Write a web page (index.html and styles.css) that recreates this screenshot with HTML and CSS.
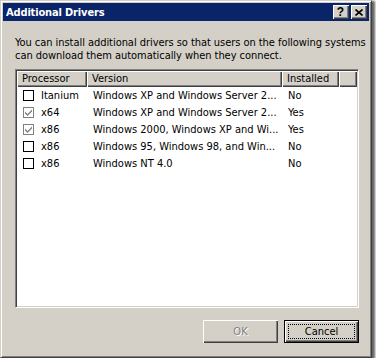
FILE: index.html
```html
<!DOCTYPE html>
<html lang="en">
<head>
  <meta charset="UTF-8" />
  <title>Additional Drivers</title>
  <link rel="stylesheet" href="styles.css">
</head>
<body>
  <div class="window">
    <div class="titlebar">
      <span class="title">Additional Drivers</span>
      <div class="caption-buttons">
        <span class="cap-btn help">?</span>
        <span class="cap-btn close">
          <svg width="8" height="7" viewBox="0 0 8 7"><path d="M0.5 0.5 L7.5 6.5 M7.5 0.5 L0.5 6.5" stroke="#000" stroke-width="1.6" fill="none"/></svg>
        </span>
      </div>
    </div>

    <div class="content">
      <p class="intro">You can install additional drivers so that users on the following systems<br>can download them automatically when they connect.</p>

      <div class="listview">
        <div class="lv-header">
          <div class="col">Processor</div>
          <div class="col">Version</div>
          <div class="col">Installed</div>
          <div class="col"></div>
        </div>

        <div class="lv-row">
          <div class="cell proc"><span class="check"></span>Itanium</div>
          <div class="cell">Windows XP and Windows Server 2...</div>
          <div class="cell">No</div>
        </div>
        <div class="lv-row">
          <div class="cell proc"><span class="check checked"><svg width="9" height="9" viewBox="0 0 9 9"><path d="M1 3.5 L3.5 6 L8 1.5 L8 3.5 L3.5 8 L1 5.5 Z" fill="#808080"/></svg></span>x64</div>
          <div class="cell">Windows XP and Windows Server 2...</div>
          <div class="cell">Yes</div>
        </div>
        <div class="lv-row">
          <div class="cell proc"><span class="check checked"><svg width="9" height="9" viewBox="0 0 9 9"><path d="M1 3.5 L3.5 6 L8 1.5 L8 3.5 L3.5 8 L1 5.5 Z" fill="#808080"/></svg></span>x86</div>
          <div class="cell">Windows 2000, Windows XP and Wi...</div>
          <div class="cell">Yes</div>
        </div>
        <div class="lv-row">
          <div class="cell proc"><span class="check"></span>x86</div>
          <div class="cell">Windows 95, Windows 98, and Win...</div>
          <div class="cell">No</div>
        </div>
        <div class="lv-row">
          <div class="cell proc"><span class="check"></span>x86</div>
          <div class="cell">Windows NT 4.0</div>
          <div class="cell">No</div>
        </div>
      </div>

      <div class="buttons">
        <button class="btn" disabled>OK</button>
        <button class="btn default">Cancel</button>
      </div>
    </div>
  </div>
</body>
</html>
```

FILE: styles.css
```css
body {
  margin: 0;
  background: #fff;
  font-family: "DejaVu Sans Condensed", "DejaVu Sans", sans-serif;
  font-stretch: condensed;
  font-size: 11px;
  color: #000;
}

.window {
  width: 372px;
  height: 358px;
  box-sizing: border-box;
  background: #d4d0c8;
  border: 1px solid;
  border-color: #d4d0c8 #404040 #404040 #d4d0c8;
  padding: 2px;
  box-shadow: inset 1px 1px #fff, inset -1px -1px #808080, 2px 2px 2px 1px rgba(0, 0, 0, 0.6);
}

.titlebar {
  height: 18px;
  background: #0a246a;
  display: flex;
  align-items: center;
  justify-content: space-between;
  padding: 0 2px 0 2px;
}

.title {
  color: #fff;
  font-weight: bold;
  font-size: 11px;
  letter-spacing: -0.15px;
  padding-left: 1px;
}

.caption-buttons {
  display: flex;
  gap: 2px;
}

.cap-btn {
  width: 16px;
  height: 14px;
  box-sizing: border-box;
  background: #d4d0c8;
  box-shadow: inset 1px 1px #fff, inset -1px -1px #404040, inset -2px -2px #808080;
  display: flex;
  align-items: center;
  justify-content: center;
}

.cap-btn.help {
  font-family: "Liberation Sans", sans-serif;
  font-weight: bold;
  font-size: 12px;
  line-height: 14px;
  padding-right: 1px;
}

.cap-btn.close svg {
  margin-right: 1px;
}

.content {
  padding: 15px 10px 0 12px;
}

.intro {
  margin: 0 0 7px 0;
  line-height: 13px;
  white-space: nowrap;
  letter-spacing: -0.05px;
}

.listview {
  width: 344px;
  height: 239px;
  box-sizing: border-box;
  background: #fff;
  border: 1px solid;
  border-color: #808080 #fff #fff #808080;
  box-shadow: inset 1px 1px #404040, inset -1px -1px #d4d0c8;
  padding: 1px;
}

.lv-header,
.lv-row {
  display: grid;
  grid-template-columns: 70px 195px 57px 1fr;
}

.lv-header .col {
  height: 16px;
  line-height: 16px;
  padding-left: 5px;
  background: #d4d0c8;
  box-shadow: inset 1px 1px #fff, inset -1px -1px #404040, inset -2px -2px #808080;
}

.lv-row {
  height: 17px;
  line-height: 17px;
}

.cell {
  padding-left: 6px;
  white-space: nowrap;
  overflow: hidden;
}

.cell.proc {
  display: flex;
  align-items: center;
}

.check {
  width: 11px;
  height: 11px;
  box-sizing: border-box;
  border: 1px solid #000;
  background: #fff;
  margin-right: 7px;
  display: flex;
  align-items: center;
  justify-content: center;
}

.check.checked {
  border-color: #808080;
}

.buttons {
  display: flex;
  justify-content: flex-end;
  gap: 6px;
  margin-top: 12px;
  width: 344px;
}

.btn {
  width: 75px;
  height: 23px;
  padding: 0;
  border: none;
  background: #d4d0c8;
  font: inherit;
  color: #000;
  box-shadow: inset 1px 1px #fff, inset -1px -1px #404040, inset -2px -2px #808080;
  position: relative;
}

.btn:disabled {
  color: #808080;
  text-shadow: 1px 1px #fff;
}

.btn.default {
  border: 1px solid #000;
}

.btn.default::after {
  content: "";
  position: absolute;
  top: 3px;
  left: 3px;
  right: 3px;
  bottom: 3px;
  border: 1px dotted #000;
}
```
